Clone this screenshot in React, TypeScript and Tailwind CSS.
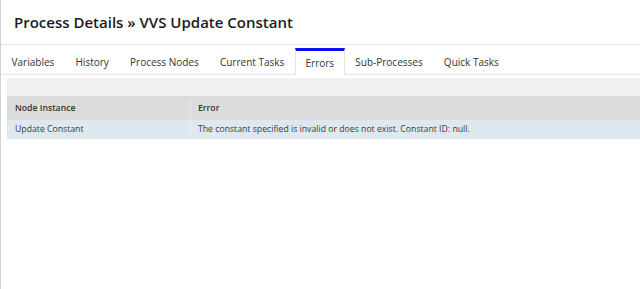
const tabs = [
  "Variables",
  "History",
  "Process Nodes",
  "Current Tasks",
  "Errors",
  "Sub-Processes",
  "Quick Tasks",
];

export default function App() {
  const active = "Errors";

  return (
    <div
      className="h-[289px] w-full overflow-hidden border-l border-[#d2d2d2] bg-white text-[#222]"
      style={{ fontFamily: '"Open Sans", "Noto Sans", sans-serif' }}
    >
      {/* Header */}
      <div className="flex h-[45px] items-center border-b border-[#e3e3e3] pl-[13px]">
        <h1 className="text-[15px] font-semibold text-[#1b1b1b]">
          Process Details » VVS Update Constant
        </h1>
      </div>

      {/* Tabs */}
      <div className="mt-[3px] flex h-[27px] border-b border-[#e3e3e3]">
        {tabs.map((t) =>
          t === active ? (
            <div
              key={t}
              className="-mb-px flex items-center border-x border-t-[3px] border-x-[#e3e3e3] border-t-[#1010f0] bg-white px-[9.6px] text-[10px] text-[#333]"
            >
              {t}
            </div>
          ) : (
            <div
              key={t}
              className="flex items-center border-t-[3px] border-transparent px-[10.6px] text-[10px] text-[#333]"
            >
              {t}
            </div>
          )
        )}
      </div>

      {/* Table */}
      <div className="ml-[6px] mt-[3px]">
        <div className="h-[19px] border-b border-[#d6d6d6] bg-[#f0f0f0]" />
        <div className="flex h-[23px] bg-[#dcdcdc] text-[8.7px] font-semibold text-[#333]">
          <div className="flex w-[184px] items-center border-r border-[#e6e6e6] px-[8px]">
            Node Instance
          </div>
          <div className="flex flex-1 items-center px-[7px]">Error</div>
        </div>
        <div className="flex h-[19px] bg-[#dfe8ef] text-[8.7px] text-[#3a3a3a]">
          <div className="flex w-[184px] items-center border-r border-[#eef2f5] px-[8px]">
            Update Constant
          </div>
          <div className="flex flex-1 items-center px-[7px]">
            The constant specified is invalid or does not exist. Constant ID: null.
          </div>
        </div>
      </div>
    </div>
  );
}
